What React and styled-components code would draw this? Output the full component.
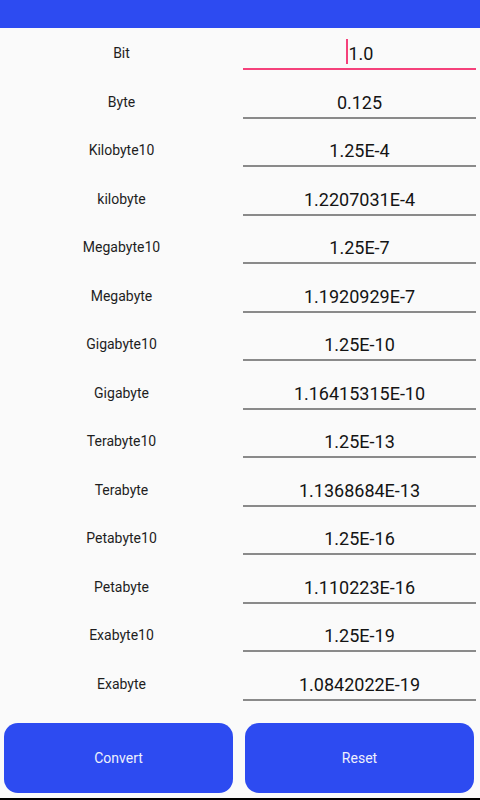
import React from 'react';
import styled, { createGlobalStyle } from 'styled-components';

const units = [
    ['Bit', '1.0'],
    ['Byte', '0.125'],
    ['Kilobyte10', '1.25E-4'],
    ['kilobyte', '1.2207031E-4'],
    ['Megabyte10', '1.25E-7'],
    ['Megabyte', '1.1920929E-7'],
    ['Gigabyte10', '1.25E-10'],
    ['Gigabyte', '1.16415315E-10'],
    ['Terabyte10', '1.25E-13'],
    ['Terabyte', '1.1368684E-13'],
    ['Petabyte10', '1.25E-16'],
    ['Petabyte', '1.110223E-16'],
    ['Exabyte10', '1.25E-19'],
    ['Exabyte', '1.0842022E-19'],
];

const App = () => {
    return (
        <Screen>
            <GlobalStyle />
            <TopBar />
            <List>
                {units.map(([name, value], i) => (
                    <Row key={name}>
                        <Label>{name}</Label>
                        <Field focused={i === 0}>
                            {i === 0 && <Cursor />}
                            {value}
                        </Field>
                    </Row>
                ))}
            </List>
            <Buttons>
                <Button>Convert</Button>
                <Button>Reset</Button>
            </Buttons>
            <NavEdge />
        </Screen>
    );
};

const GlobalStyle = createGlobalStyle`
    html, body {
        margin: 0;
        padding: 0;
        background: #FAFAFA;
    }
    body {
        font-family: Roboto, "Liberation Sans", sans-serif;
    }
`;

const Screen = styled.div`
    width: 480px;
    height: 800px;
    display: flex;
    flex-direction: column;
    background: #FAFAFA;
    overflow: hidden;
`;

const TopBar = styled.div`
    height: 28px;
    flex-shrink: 0;
    background: #2D4BF1;
`;

const List = styled.div`
    display: flex;
    flex-direction: column;
    padding-top: 2px;
`;

const Row = styled.div`
    height: 48.5px;
    display: grid;
    grid-template-columns: 243px 233px;
`;

const Label = styled.div`
    display: flex;
    align-items: center;
    justify-content: center;
    padding-top: 4px;
    height: 42px;
    box-sizing: border-box;
    font-size: 14px;
    color: #1E1E1E;
`;

const Field = styled.div`
    position: relative;
    display: flex;
    justify-content: center;
    align-items: center;
    height: 40px;
    padding-top: 9px;
    box-sizing: border-box;
    border-bottom: 2px solid ${p => p.focused ? '#F5417B' : '#8A8A8A'};
    font-size: 18px;
    color: #141414;
`;

const Cursor = styled.span`
    display: inline-block;
    width: 2px;
    height: 25px;
    margin-right: 1px;
    margin-top: -4px;
    background: #F5417B;
`;

const Buttons = styled.div`
    display: grid;
    grid-template-columns: 229px 229px;
    gap: 12px;
    padding: 14px 6px 0 4px;
`;

const Button = styled.div`
    height: 70px;
    border-radius: 14px;
    background: #2D4BF1;
    color: #EEF0FC;
    font-size: 14px;
    display: flex;
    align-items: center;
    justify-content: center;
`;

const NavEdge = styled.div`
    margin-top: auto;
    height: 2px;
    background: #000;
`;

export default App;
